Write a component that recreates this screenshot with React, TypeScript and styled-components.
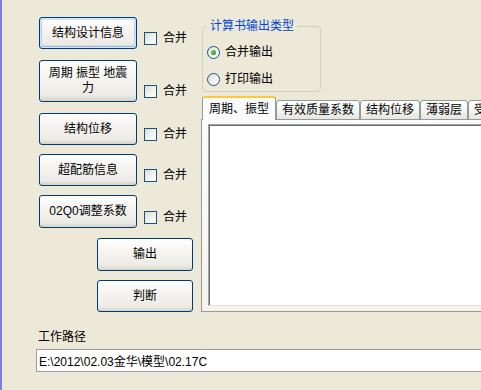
import React from "react";
import styled, { createGlobalStyle } from "styled-components";

const Global = createGlobalStyle`
  html, body { margin: 0; padding: 0; background: #ece9d8; }
  body {
    width: 481px; height: 390px; overflow: hidden;
    font-family: "Liberation Sans", "Noto Sans CJK SC", sans-serif;
    font-size: 12px; color: #000;
  }
  * { box-sizing: border-box; }
`;

const Window = styled.div`
  display: flex;
  width: 481px;
  height: 390px;
  overflow: hidden;
  background: #ece9d8;
`;

const Edge = styled.div`
  width: 2px;
  flex: none;
  background: #7a80d8;
`;

const Content = styled.div`
  flex: 1;
  min-width: 0;
  display: flex;
  flex-direction: column;
`;

const Main = styled.div`
  display: flex;
  padding-left: 37px;
`;

const LeftCol = styled.div`
  width: 162px;
  flex: none;
  display: flex;
  flex-direction: column;
  padding-top: 17px;
`;

const OptionRow = styled.div<{ $mt: number }>`
  display: flex;
  align-items: flex-end;
  gap: 7px;
  margin-top: ${(p) => p.$mt}px;
`;

const XPButton = styled.button<{ $w: number; $h: number; $default?: boolean; $mt?: number; $ml?: number }>`
  width: ${(p) => p.$w}px;
  height: ${(p) => p.$h}px;
  margin: ${(p) => p.$mt ?? 0}px 0 0 ${(p) => p.$ml ?? 0}px;
  padding: 0;
  flex: none;
  border: 1px solid #003c74;
  border-radius: 3px;
  background: linear-gradient(180deg, #ffffff 0%, #f5f4f0 40%, #ecebe6 85%, #d8d2c6 100%);
  box-shadow: ${(p) =>
    p.$default
      ? "inset 0 0 0 1px #cee7ff, inset 0 -2px 0 #98b8ea, inset 2px 0 0 #b9d1fa, inset -2px 0 0 #b9d1fa, inset 0 2px 0 #cee7ff"
      : "none"};
  font-family: "Liberation Sans", "Noto Sans CJK SC", sans-serif;
  font-size: 12px;
  line-height: 15px;
  color: #000;
  text-align: center;
`;

const CheckLabel = styled.label`
  display: flex;
  align-items: center;
  gap: 6px;
  margin-bottom: 4px;
  line-height: 13px;
`;

const CheckBox = styled.span`
  width: 13px;
  height: 13px;
  flex: none;
  border: 1px solid #1c5180;
  background: linear-gradient(135deg, #dcdcd7 0%, #f0f0ec 50%, #ffffff 100%);
`;

const RightCol = styled.div`
  flex: 1;
  min-width: 0;
  display: flex;
  flex-direction: column;
  padding-top: 19px;
`;

const GroupBox = styled.fieldset`
  width: 119px;
  height: 73px;
  margin: 0 0 0 1px;
  padding: 0 0 0 4px;
  border: 1px solid #d0d0bf;
  border-radius: 4px;
  display: flex;
  flex-direction: column;
`;

const GroupTitle = styled.legend`
  padding: 0 3px;
  margin: 0;
  color: #0046d5;
  font-size: 12px;
  line-height: 14px;
`;

const RadioRow = styled.div<{ $mt: number }>`
  display: flex;
  align-items: center;
  gap: 5px;
  height: 13px;
  margin-top: ${(p) => p.$mt}px;
  line-height: 13px;
`;

const Radio = styled.span<{ $checked?: boolean }>`
  width: 13px;
  height: 13px;
  flex: none;
  border-radius: 50%;
  border: 1px solid #1c5180;
  background: linear-gradient(135deg, #dcdcd7 0%, #f3f3ef 55%, #ffffff 100%);
  display: flex;
  align-items: center;
  justify-content: center;
  &::after {
    content: "";
    display: ${(p) => (p.$checked ? "block" : "none")};
    width: 5px;
    height: 5px;
    border-radius: 50%;
    background: radial-gradient(circle at 35% 35%, #5fd45f, #21a121 70%);
  }
`;

const TabBar = styled.div`
  display: flex;
  align-items: flex-end;
  height: 23px;
  margin-top: 5px;
  margin-bottom: -1px;
  position: relative;
  z-index: 1;
`;

const Tab = styled.div<{ $active?: boolean }>`
  flex: none;
  height: ${(p) => (p.$active ? 24 : 20)}px;
  margin-left: ${(p) => (p.$active ? 1 : 0)}px;
  padding: ${(p) => (p.$active ? "2px 6px 0" : "0 5px")};
  border: 1px solid #919b9c;
  border-bottom: ${(p) => (p.$active ? "none" : "1px solid #919b9c")};
  border-top: ${(p) => (p.$active ? "2px solid #ffc83c" : "1px solid #919b9c")};
  border-radius: 3px 3px 0 0;
  background: ${(p) =>
    p.$active ? "#fcfcfe" : "linear-gradient(180deg, #ffffff 0%, #f3f3ef 60%, #e6e5de 100%)"};
  line-height: 18px;
  font-size: 12px;
  white-space: nowrap;
`;

const Panel = styled.div`
  width: 300px;
  height: 193px;
  border: 1px solid #919b9c;
  background: linear-gradient(180deg, #fcfcfe 0%, #f4f3ee 100%);
  padding: 4px 0 5px 6px;
`;

const ListBox = styled.div`
  height: 100%;
  background: #fff;
  border-top: 1px solid #a0a0a0;
  border-left: 1px solid #a0a0a0;
  border-bottom: 1px solid #e4e1d4;
  box-shadow: inset 1px 1px 0 #6e6e6e;
`;

const Bottom = styled.div`
  display: flex;
  flex-direction: column;
  padding-left: 34px;
  margin-top: 18px;
`;

const PathLabel = styled.div`
  margin-left: 2px;
  line-height: 14px;
  font-size: 12px;
`;

const PathInput = styled.input`
  width: 460px;
  height: 23px;
  margin-top: 5px;
  padding: 0 2px;
  border: 1px solid #9c9c9c;
  background: #fff;
  font-family: "Liberation Sans", "Noto Sans CJK SC", sans-serif;
  font-size: 12px;
  color: #000;
  outline: none;
`;

const options = [
  { label: <>结构设计信息</>, h: 32, mt: 0, def: true },
  { label: <>周期 振型 地震<br />力</>, h: 42, mt: 11 },
  { label: <>结构位移</>, h: 32, mt: 11 },
  { label: <>超配筋信息</>, h: 32, mt: 9 },
  { label: <>02Q0调整系数</>, h: 33, mt: 9 },
];

const tabs = ["周期、振型", "有效质量系数", "结构位移", "薄弱层", "受剪承载力"];

export default function App() {
  return (
    <>
      <Global />
      <Window>
        <Edge />
        <Content>
          <Main>
            <LeftCol>
              {options.map((o, i) => (
                <OptionRow key={i} $mt={o.mt}>
                  <XPButton $w={98} $h={o.h} $default={o.def}>
                    {o.label}
                  </XPButton>
                  <CheckLabel>
                    <CheckBox />
                    合并
                  </CheckLabel>
                </OptionRow>
              ))}
              <XPButton $w={96} $h={33} $mt={10} $ml={58}>输出</XPButton>
              <XPButton $w={96} $h={32} $mt={9} $ml={58}>判断</XPButton>
            </LeftCol>
            <RightCol>
              <GroupBox>
                <GroupTitle>计算书输出类型</GroupTitle>
                <RadioRow $mt={13}>
                  <Radio $checked />
                  合并输出
                </RadioRow>
                <RadioRow $mt={14}>
                  <Radio />
                  打印输出
                </RadioRow>
              </GroupBox>
              <TabBar>
                {tabs.map((t, i) => (
                  <Tab key={t} $active={i === 0}>
                    {t}
                  </Tab>
                ))}
              </TabBar>
              <Panel>
                <ListBox />
              </Panel>
            </RightCol>
          </Main>
          <Bottom>
            <PathLabel>工作路径</PathLabel>
            <PathInput readOnly value={"E:\\2012\\02.03金华\\模型\\02.17C"} />
          </Bottom>
        </Content>
      </Window>
    </>
  );
}
